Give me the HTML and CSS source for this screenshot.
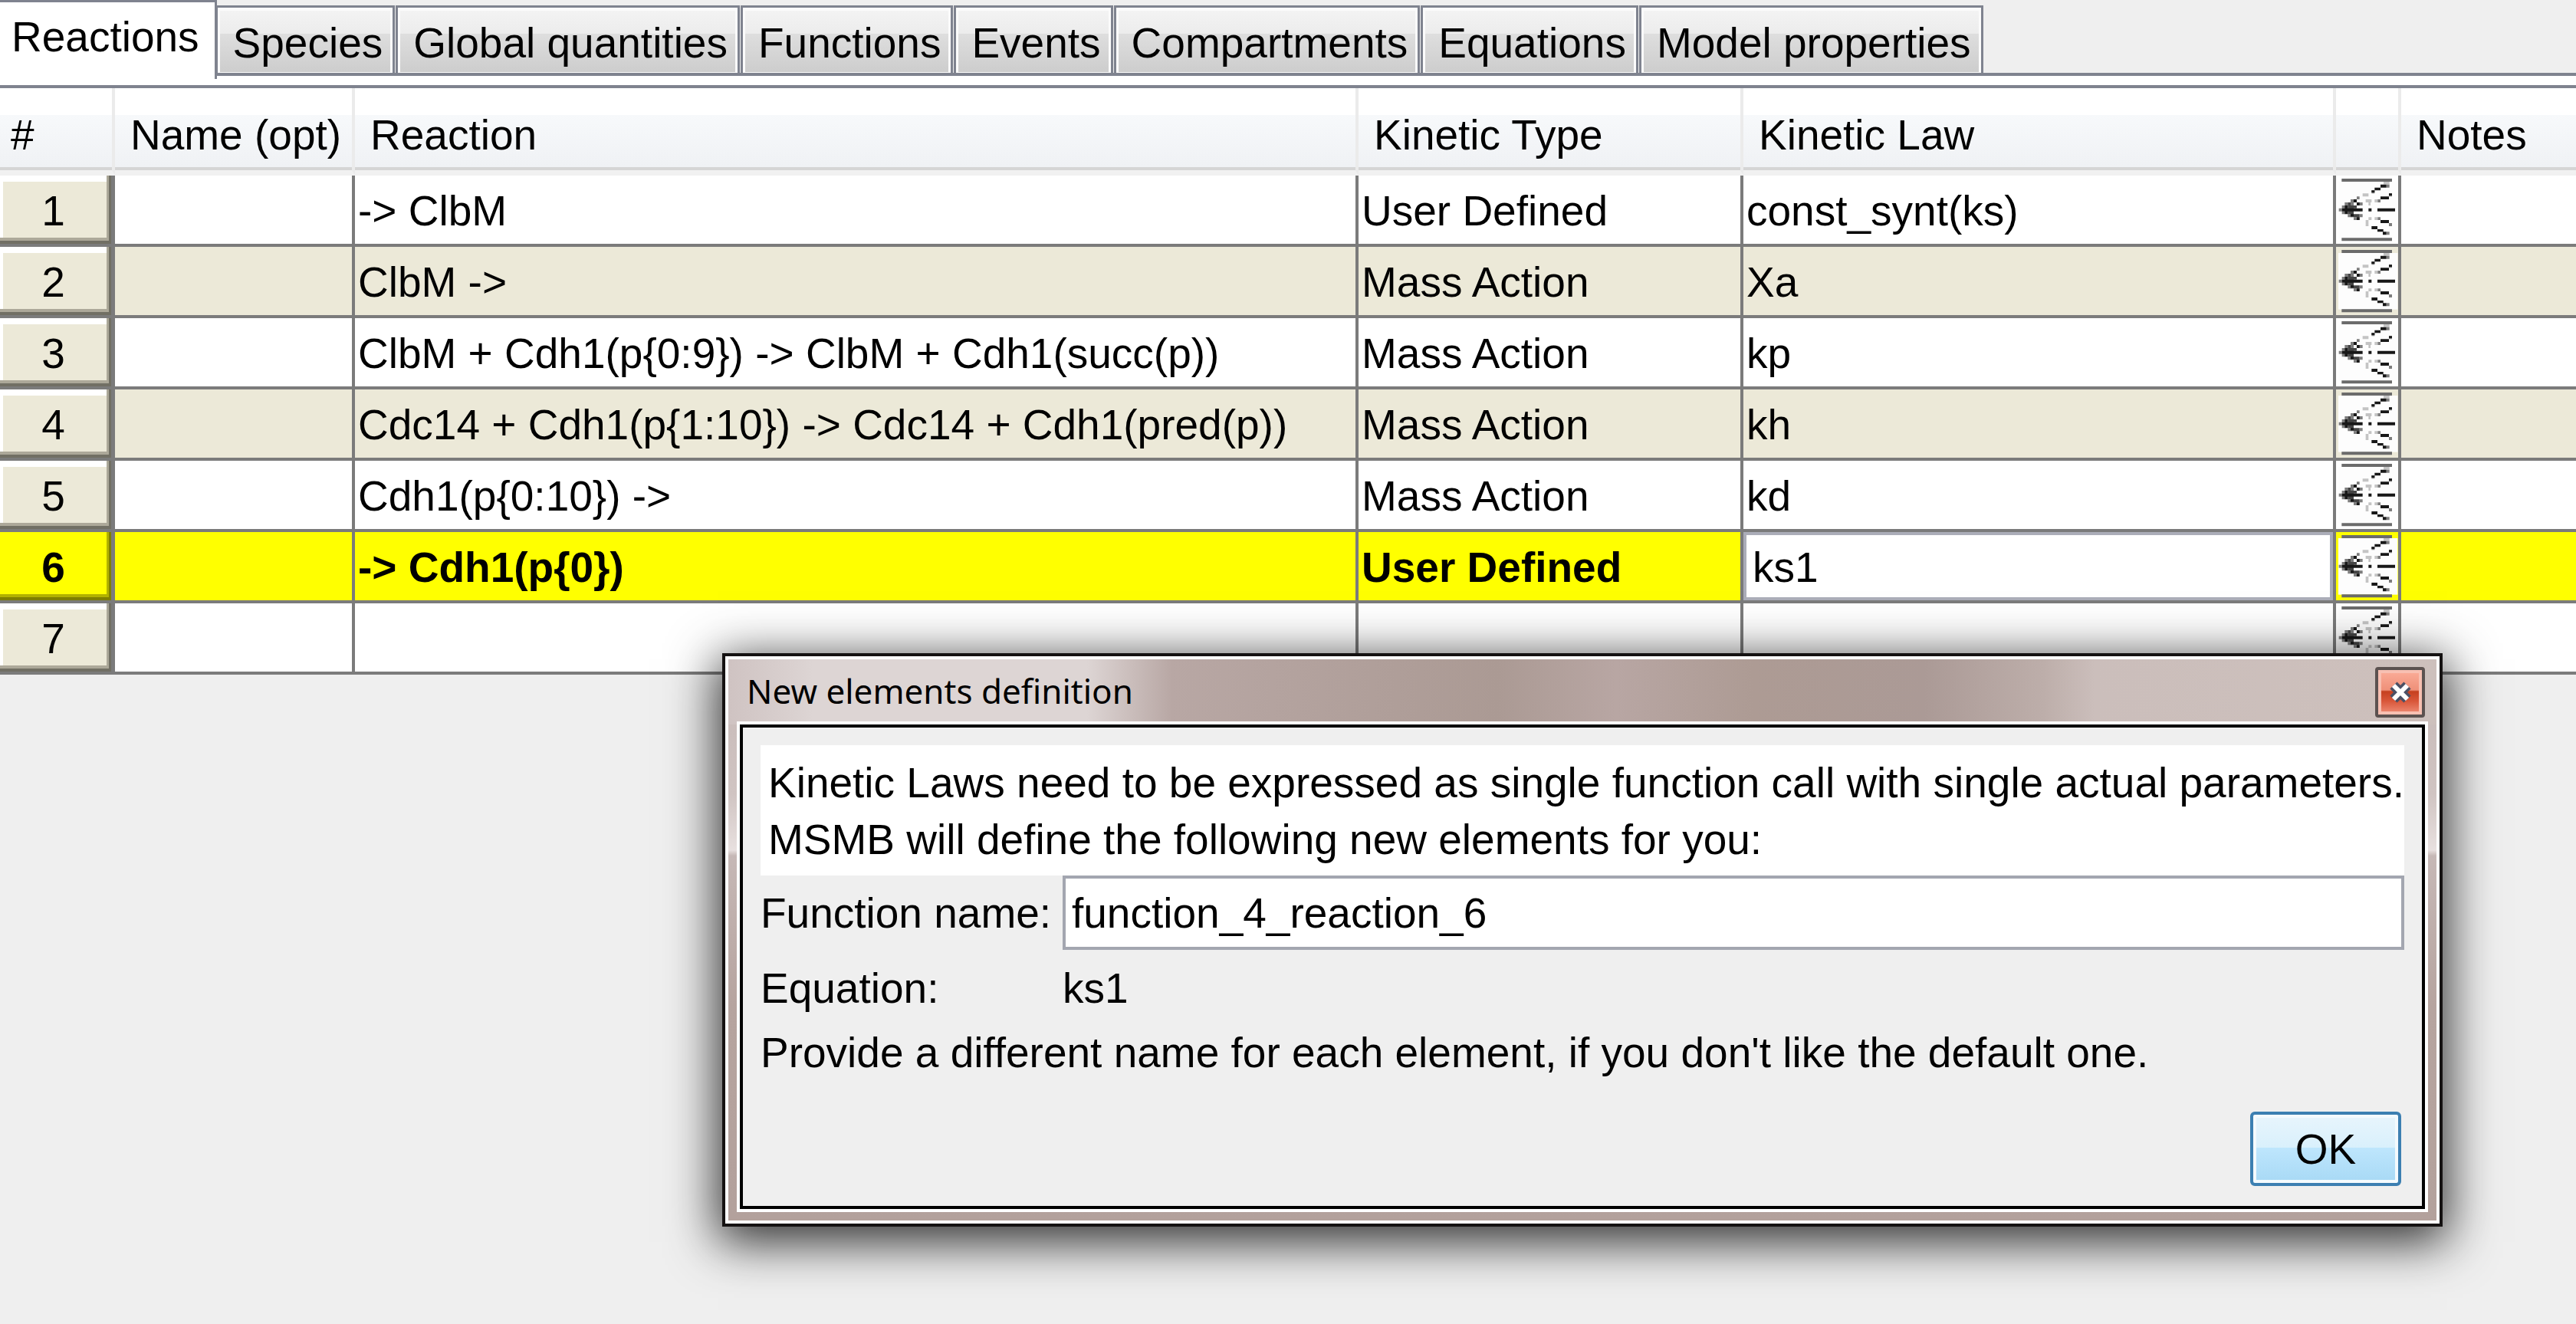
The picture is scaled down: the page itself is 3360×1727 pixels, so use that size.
FILE: index.html
```html
<!DOCTYPE html>
<html lang="en">
<head>
<meta charset="utf-8">
<title>MSMB - Reactions</title>
<link rel="stylesheet" href="styles.css">
</head>
<body>
<svg class="defs" aria-hidden="true">
  <symbol id="expand" viewBox="81 60 243 267" preserveAspectRatio="none">
    <rect x="90" y="84" width="232" height="221" fill="#fdfdfd"/>
    <path fill="#6b6b6b" d="M103 72h197v12H103zM103 304h197v12H103z"/>
    <path fill="#c4c4c4" d="M267 84h23v11h-23zM185 130h23v12h-23zM197 153h23v12h-23zM208 223h12v11h-12zM197 234h11v24h-11zM232 153h12v12h-12zM232 223h12v11h-12zM208 165h8v12h-8z"/>
    <path fill="#7d7d7d" d="M278 95h12v12h-12zM220 118h12v12h-12zM288 130h12v12h-12zM162 142h11v11h-11zM138 153h24v12h-24zM244 153h11v12h-11zM115 165h12v12h-12zM138 165h12v12h-12zM162 165h23v12h-23zM92 188h12v12H92zM104 177h12v11h-12zM104 200h12v11h-12zM127 211h12v12h-12zM173 211h12v12h-12zM150 223h23v11h-23zM244 223h11v11h-11zM288 246h12v12h-12zM278 280h12v12h-12z"/>
    <path fill="#444" d="M127 165h11v12h-11zM127 177h23v34h-23zM150 211h12v12h-12zM162 211h11v12h-11zM138 211h12v12h-12zM150 177h12v11h-12z"/>
    <path fill="#181818" d="M255 95h23v12h-23zM232 107h23v11h-23zM220 118h12v8h-12zM255 142h33v11h-33zM288 130h12v8h-12zM150 153h12v12h-12zM162 165h11v12h-11zM115 177h12v34h-12zM104 188h81v12h-81zM208 188h12v12h-12zM243 188h69v12h-69zM138 211h12v8h-12zM162 223h11v11h-11zM255 234h33v12h-33zM220 258h23v12h-23zM243 270h23v10h-23zM264 280h14v12h-14z"/>
  </symbol>
</svg>

<nav class="tabs" role="tablist" aria-label="Model sections">
  <button class="tab tab-active" role="tab" aria-selected="true">Reactions</button>
  <button class="tab" role="tab">Species</button>
  <button class="tab" role="tab">Global quantities</button>
  <button class="tab" role="tab">Functions</button>
  <button class="tab" role="tab">Events</button>
  <button class="tab" role="tab">Compartments</button>
  <button class="tab" role="tab">Equations</button>
  <button class="tab" role="tab">Model properties</button>
</nav>

<main class="panel">
  <table class="grid">
    <colgroup>
      <col class="c-num"><col class="c-name"><col class="c-reaction"><col class="c-type"><col class="c-law"><col class="c-expand"><col>
    </colgroup>
    <thead>
      <tr><th>#</th><th>Name (opt)</th><th>Reaction</th><th>Kinetic Type</th><th>Kinetic Law</th><th></th><th>Notes</th></tr>
    </thead>
    <tbody>
      <tr><th scope="row">1</th><td></td><td>-&gt; ClbM</td><td>User Defined</td><td>const_synt(ks)</td><td class="icon"><svg><use href="#expand"/></svg></td><td></td></tr>
      <tr class="alt"><th scope="row">2</th><td></td><td>ClbM -&gt;</td><td>Mass Action</td><td>Xa</td><td class="icon"><svg><use href="#expand"/></svg></td><td></td></tr>
      <tr><th scope="row">3</th><td></td><td>ClbM + Cdh1(p{0:9}) -&gt; ClbM + Cdh1(succ(p))</td><td>Mass Action</td><td>kp</td><td class="icon"><svg><use href="#expand"/></svg></td><td></td></tr>
      <tr class="alt"><th scope="row">4</th><td></td><td>Cdc14 + Cdh1(p{1:10}) -&gt; Cdc14 + Cdh1(pred(p))</td><td>Mass Action</td><td>kh</td><td class="icon"><svg><use href="#expand"/></svg></td><td></td></tr>
      <tr><th scope="row">5</th><td></td><td>Cdh1(p{0:10}) -&gt;</td><td>Mass Action</td><td>kd</td><td class="icon"><svg><use href="#expand"/></svg></td><td></td></tr>
      <tr class="current"><th scope="row">6</th><td></td><td>-&gt; Cdh1(p{0})</td><td>User Defined</td><td class="editing"><input class="cell-editor" type="text" value="ks1" aria-label="Kinetic Law"></td><td class="icon"><svg><use href="#expand"/></svg></td><td></td></tr>
      <tr><th scope="row">7</th><td></td><td></td><td></td><td></td><td class="icon"><svg><use href="#expand"/></svg></td><td></td></tr>
    </tbody>
  </table>
</main>

<section class="dialog" role="dialog" aria-labelledby="dialog-title">
  <div class="frame">
    <header class="titlebar">
      <h1 id="dialog-title">New elements definition</h1>
      <button class="close" aria-label="Close">
        <svg viewBox="0 0 28 28"><path d="M5 5L23 23M23 5L5 23" stroke="#4a5065" stroke-width="13"/><path d="M5 5L23 23M23 5L5 23" stroke="#fff" stroke-width="6"/></svg>
      </button>
    </header>
    <form class="content">
      <p class="message">Kinetic Laws need to be expressed as single function call with single actual parameters.<br>MSMB will define the following new elements for you:</p>
      <div class="fields">
        <label for="fn">Function name:</label>
        <input id="fn" class="textbox" type="text" value="function_4_reaction_6">
        <span>Equation:</span>
        <span>ks1</span>
      </div>
      <p class="hint">Provide a different name for each element, if you don't like the default one.</p>
      <div class="actions"><button class="ok" type="button">OK</button></div>
    </form>
  </div>
</section>
</body>
</html>
```

FILE: styles.css
```css
* { box-sizing: border-box; }

body {
  margin: 0;
  min-height: 100vh;
  background: #efefef;
  color: #000;
  font: 55px/64px "Liberation Sans", Arial, sans-serif;
}

button, input { font: inherit; color: inherit; margin: 0; border-radius: 0; }
.defs { position: absolute; width: 0; height: 0; }

/* Tab strip */
.tabs {
  display: flex;
  align-items: flex-end;
  height: 99px;
  border-bottom: 4px solid #7f838f;
}
.tab {
  height: 85px;
  padding: 4px 10px 0 17px;
  border: 4px solid #fbfbfb;
  border-width: 4px 3px 1px;
  outline: 3px solid #7f838f;
  margin-right: 7px;
  white-space: nowrap;
  background: linear-gradient(#f3f3f3, #ececec 38%, #dedede 38%, #cdcdcd);
}
.tab-active {
  height: 103px;
  margin: 0 1px -8px 0;
  padding: 0 20px 10px 15px;
  border: 0;
  border-top: 3px solid #7f838f;
  border-right: 3px solid #7f838f;
  outline: 0;
  background: #fff;
}

/* Reaction table */
.panel { border-top: 12px solid #fff; }
.grid {
  width: 100%;
  table-layout: fixed;
  border-collapse: separate;
  border-spacing: 0;
  border-top: 4px solid #7f838f;
}
.c-num { width: 150px; }
.c-name { width: 313px; }
.c-reaction { width: 1309px; }
.c-type { width: 502px; }
.c-law { width: 773px; }
.c-expand { width: 85px; }

.grid thead th {
  height: 114px;
  padding: 14px 0 0 20px;
  text-align: left;
  font-weight: 400;
  white-space: nowrap;
  border-right: 4px solid #ebebeb;
  border-bottom: 7px solid #f1f1f1;
  background:
    linear-gradient(#d5d5d5, #d5d5d5) bottom / 100% 4px no-repeat,
    linear-gradient(#fff 33%, #f7f9fb 33%, #eff1f4);
}
.grid thead th:first-child { padding-left: 14px; }

.grid td {
  height: 93px;
  padding: 2px 0 0 4px;
  white-space: nowrap;
  border-right: 4px solid #7b7b7b;
  border-bottom: 4px solid #7b7b7b;
  background: #fff;
}
.grid tr > :last-child { border-right: 0; }
.grid .alt td { background: #ece9d8; }
.grid .current td { background: #ff0; font-weight: 700; }

.grid tbody th {
  padding: 2px 6px 0 0;
  font-weight: 400;
  border-right: 5px solid #7b7b7b;
  border-bottom: 4px solid #7b7b7b;
  background: #ece9d8;
  box-shadow: inset -3px -4px #716f64, inset -6px -8px #aca899, inset 4px 8px #fff;
}
.grid .current th {
  font-weight: 700;
  background: #ff0;
  box-shadow: inset -3px -4px #7f7f00, inset -6px -8px #b2b200;
}

.grid td.icon { padding: 0; }
.icon svg { display: block; width: 81px; height: 89px; }
.grid td.editing { padding: 0; }
.cell-editor {
  display: block;
  width: 100%;
  height: 89px;
  padding: 2px 8px 0;
  border: 4px solid #abadb8;
  background: #fff;
  font-weight: 400;
  outline: 0;
}

/* Dialog window */
.dialog {
  position: absolute;
  left: 942px;
  top: 852px;
  width: 2244px;
  border: 4px solid #151212;
  background: #fff;
  box-shadow: 0 14px 60px 6px rgba(0, 0, 0, .8);
}
.frame {
  margin: 4px;
  padding: 0 15px 15px;
  background: linear-gradient(#c6b8b6, #d0c4c2 24%, #e8e0df 34%, #c6b8b6 35%, #b6a49f 62%, #b3a19c);
}
.titlebar {
  display: flex;
  align-items: center;
  justify-content: space-between;
  height: 85px;
  margin: 0 -15px;
  padding: 0 15px 4px 24px;
  background: linear-gradient(90deg, #cfc3c2, #ddd5d4 5%, #ddd5d4 21%, #b8a7a4 26%, #ab9a94 45%, #b8a6a3 52%, #ad9b94 60%, #ab9a96 70%, #bdaeaa 77%, #cbbebb 80%, #cdc0bc);
}
.titlebar h1 {
  margin: 0;
  font: 400 44px/64px "Noto Sans", "Open Sans", sans-serif;
}
.close {
  display: grid;
  place-items: center;
  width: 65px;
  height: 66px;
  margin-top: 4px;
  padding: 0;
  border: 4px solid #5c5250;
  border-radius: 4px;
  background: linear-gradient(#fcae9a, #ef9079 45%, #c5401f 48%, #d9573a 70%, #f0907a);
  box-shadow: inset 0 0 0 4px #f8c0b2;
}
.close svg { width: 28px; height: 28px; }

.content {
  padding: 23px 23px 26px;
  border: 4px solid #000;
  outline: 4px solid #fff;
  background: #efefef;
}
.content p { margin: 0; }
.message {
  padding: 12px 10px 10px;
  line-height: 74px;
  white-space: nowrap;
  background: #fff;
}
.fields {
  display: grid;
  grid-template-columns: 394px 1fr;
  row-gap: 18px;
  align-items: center;
}
.textbox {
  width: 100%;
  height: 97px;
  padding: 0 8px;
  border: 4px solid #a3a6b0;
  background: #fff;
}
.content .hint { margin-top: 20px; }
.actions { display: flex; justify-content: flex-end; padding: 45px 4px 0 0; }
.ok {
  width: 197px;
  height: 97px;
  border: 4px solid #3c7fb1;
  border-radius: 6px;
  background: linear-gradient(#e8f5fc, #d9f0fc 48%, #bee6fd 48%, #a7d9f5);
  box-shadow: inset 0 0 0 4px #f4fafd;
}
```
